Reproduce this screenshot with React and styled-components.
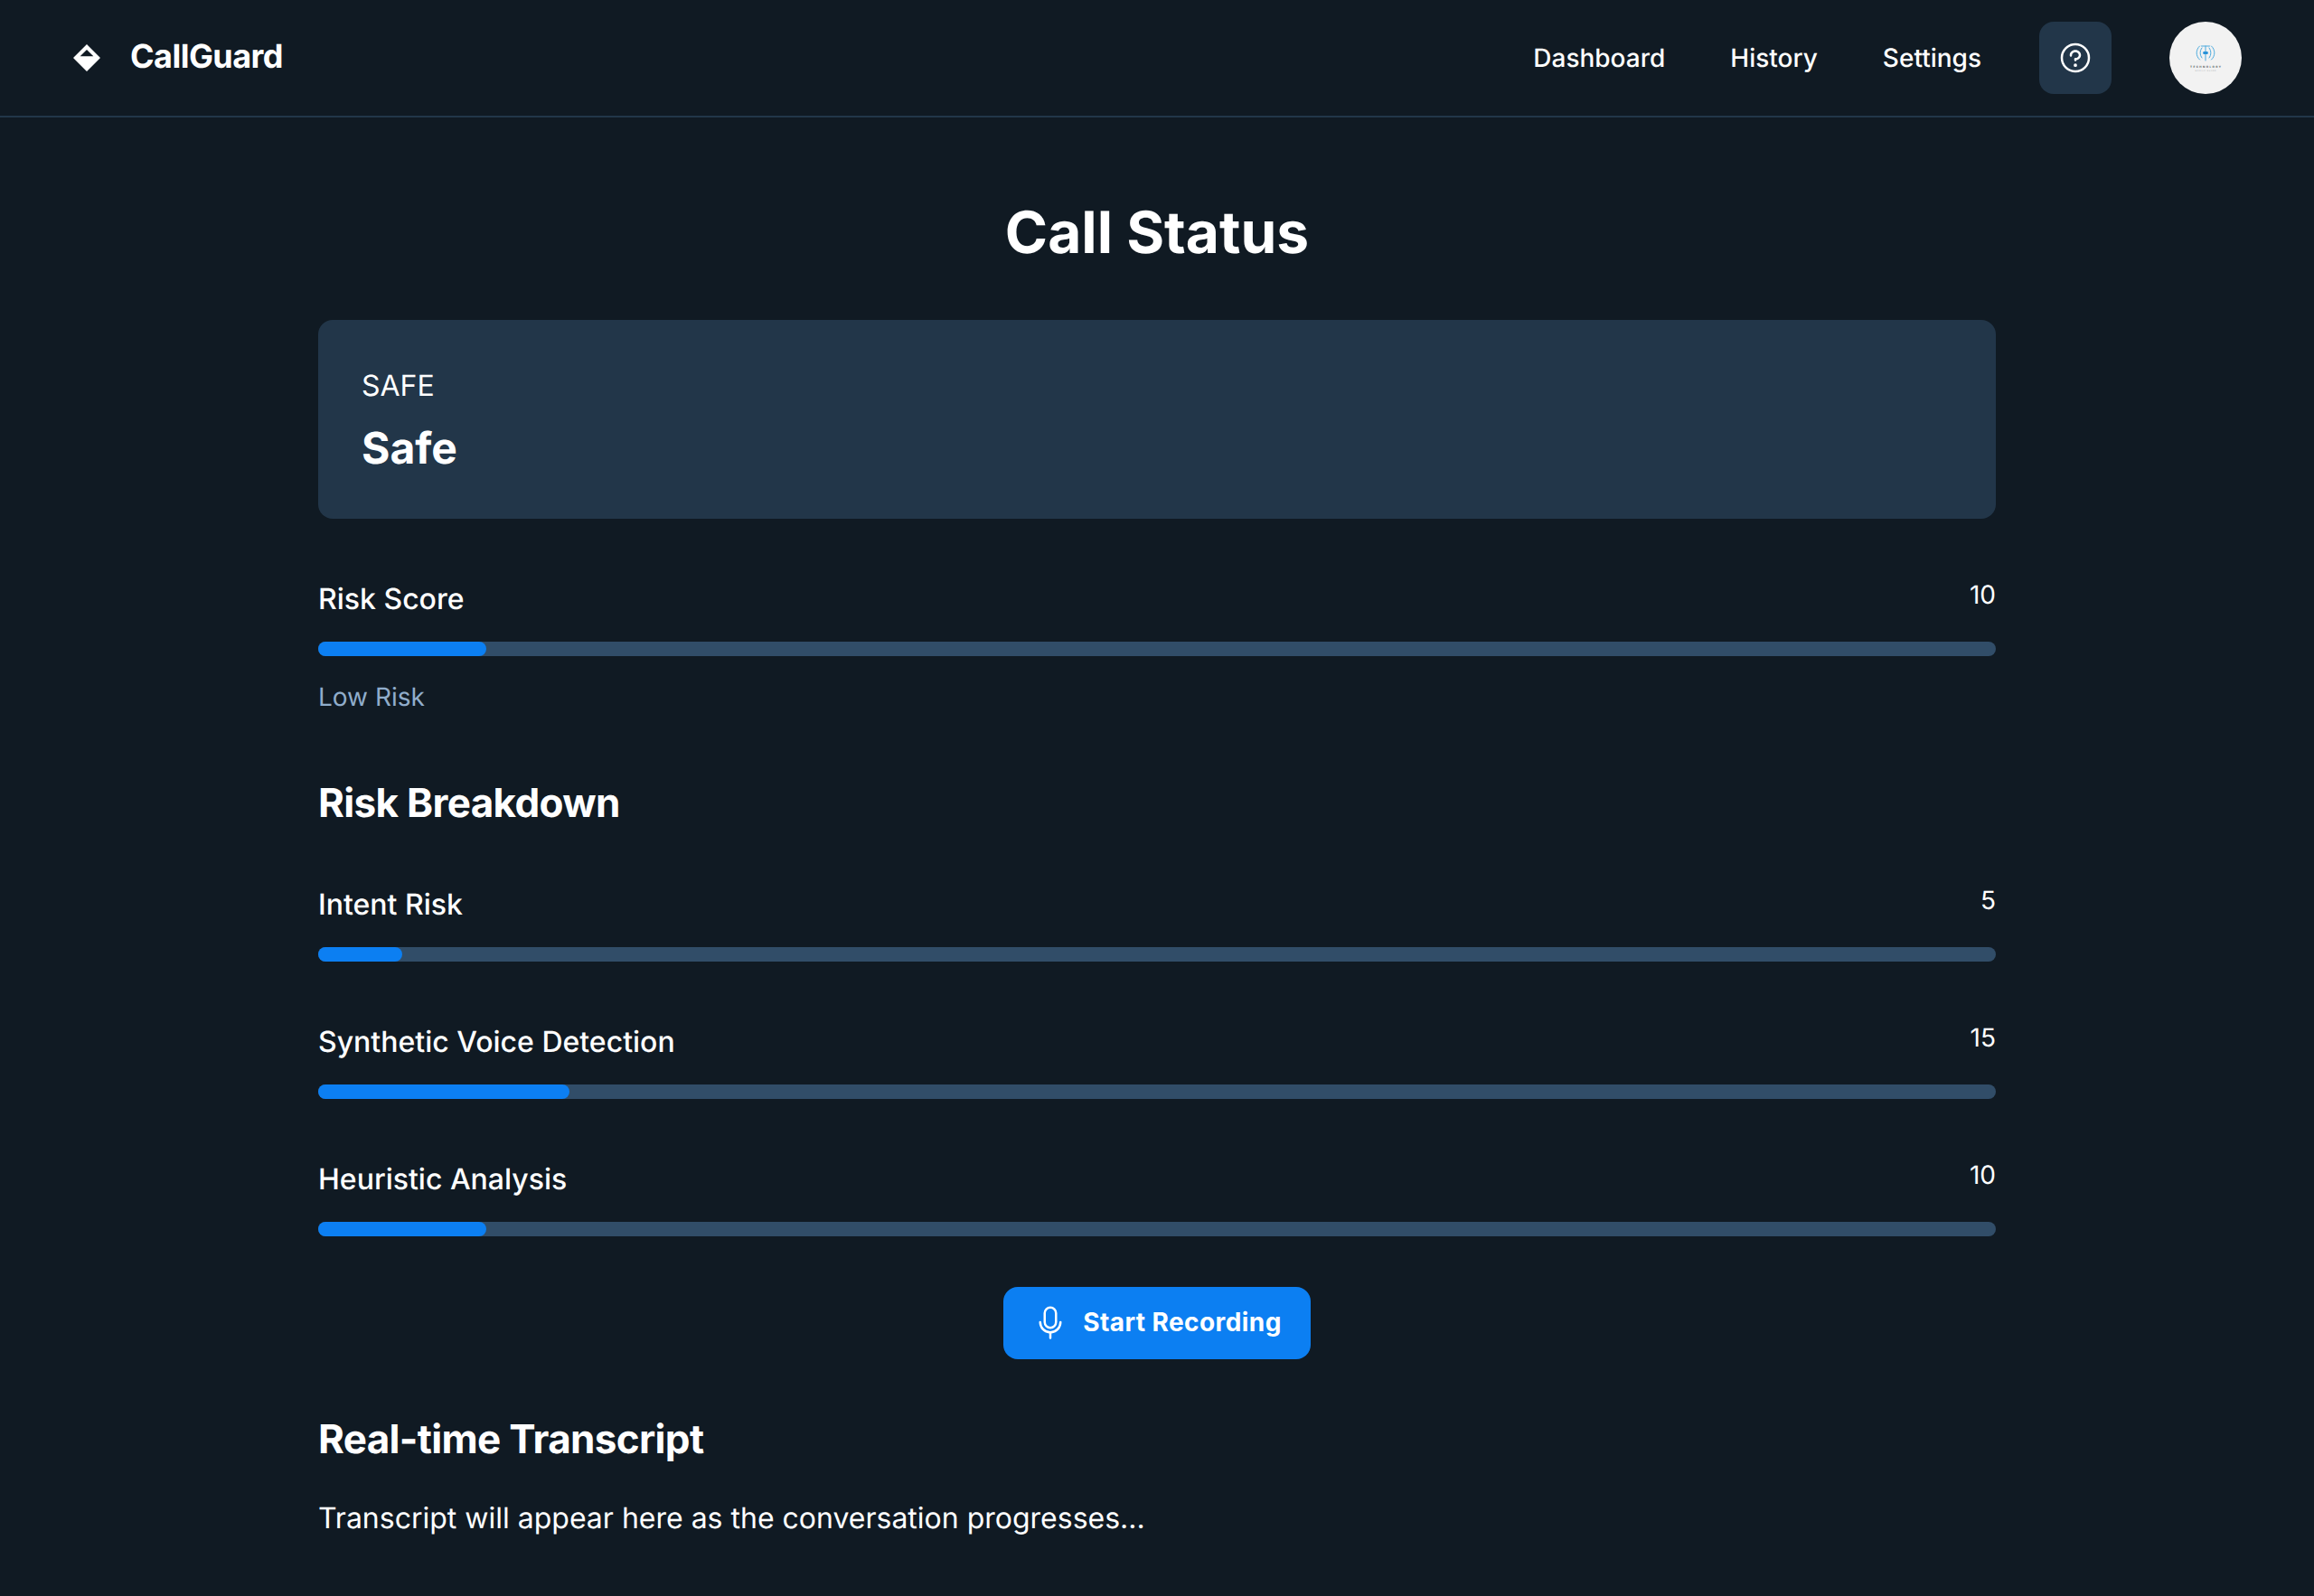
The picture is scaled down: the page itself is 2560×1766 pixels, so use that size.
import React from "react";
import styled, { createGlobalStyle } from "styled-components";
import { PiQuestion, PiMicrophone } from "react-icons/pi";

const GlobalStyle = createGlobalStyle`
  html, body {
    margin: 0;
    padding: 0;
    background-color: #101a23;
  }
  * {
    box-sizing: border-box;
  }
`;

const Page = styled.div`
  min-height: 1766px;
  background-color: #101a23;
  color: #ffffff;
  font-family: Inter, "Noto Sans", sans-serif;
  text-rendering: geometricPrecision;
  overflow: hidden;
`;

const Header = styled.header`
  display: flex;
  align-items: center;
  justify-content: space-between;
  padding: 24px 80px;
  border-bottom: 2px solid #223649;
`;

const Brand = styled.div`
  display: flex;
  align-items: center;
  gap: 32px;
`;

const BrandName = styled.h2`
  margin: 0;
  padding-bottom: 3px;
  font-size: 36px;
  font-weight: 700;
  line-height: 45px;
  letter-spacing: -0.54px;
`;

const HeaderRight = styled.div`
  display: flex;
  align-items: center;
  gap: 64px;
`;

const Nav = styled.nav`
  display: flex;
  align-items: center;
  gap: 72px;
`;

const NavLink = styled.a`
  color: #ffffff;
  font-size: 28px;
  font-weight: 500;
  line-height: 42px;
  text-decoration: none;
`;

const HelpButton = styled.button`
  display: flex;
  align-items: center;
  justify-content: center;
  width: 80px;
  height: 80px;
  padding: 0;
  border: none;
  border-radius: 16px;
  background-color: #223649;
  color: #ffffff;
`;

const Avatar = styled.div`
  width: 80px;
  height: 80px;
  border-radius: 50%;
  background-color: #f2f2f2;
  overflow: hidden;

  svg {
    display: block;
  }
`;

const Main = styled.main`
  width: 1856px;
  margin: 0 auto;
  padding-top: 40px;
`;

const Title = styled.h1`
  margin: 0;
  padding: 48px 0 24px;
  font-size: 64px;
  font-weight: 700;
  line-height: 80px;
  text-align: center;
`;

const StatusCard = styled.section`
  display: flex;
  flex-direction: column;
  gap: 16px;
  margin: 32px 0;
  padding: 48px;
  border-radius: 16px;
  background-color: #223649;
`;

const StatusLabel = styled.p`
  margin: 0;
  padding-top: 2px;
  font-size: 32px;
  font-weight: 400;
  line-height: 46px;
`;

const StatusValue = styled.p`
  margin: 0;
  font-size: 48px;
  font-weight: 700;
  line-height: 60px;
`;

const Meter = styled.div`
  display: flex;
  flex-direction: column;
  gap: 24px;
  padding: 32px 0;
`;

const MeterHead = styled.div`
  display: flex;
  justify-content: space-between;
  gap: 48px;
`;

const MeterLabel = styled.p`
  margin: 0;
  padding-top: 2px;
  font-size: 32px;
  font-weight: 500;
  line-height: 46px;
`;

const MeterValue = styled.p`
  margin: 0;
  font-size: 28px;
  font-weight: 400;
  line-height: 40px;
`;

const Track = styled.div`
  height: 16px;
  border-radius: 8px;
  background-color: #314d68;
`;

const Fill = styled.div`
  height: 16px;
  border-radius: 8px;
  background-color: #0c7ff2;
`;

const Hint = styled.p`
  margin: 0;
  color: #90adcb;
  font-size: 28px;
  font-weight: 400;
  line-height: 42px;
`;

const SectionTitle = styled.h2`
  margin: 0;
  padding: 37px 0 28px;
  font-size: 44px;
  font-weight: 700;
  line-height: 55px;
  letter-spacing: -0.66px;
`;

const Actions = styled.div`
  display: flex;
  justify-content: center;
  padding: 24px 0;
`;

const RecordButton = styled.button`
  display: flex;
  align-items: center;
  justify-content: center;
  gap: 16px;
  height: 80px;
  padding: 0 32px 2px;
  border: none;
  border-radius: 16px;
  background-color: #0c7ff2;
  color: #ffffff;
  font-family: inherit;
  font-size: 28px;
  font-weight: 700;
  letter-spacing: 0.42px;
`;

const Transcript = styled.p`
  margin: 0;
  padding: 8px 0 24px;
  font-size: 32px;
  font-weight: 400;
  line-height: 48px;
`;

const DiamondLogo = () => (
  <svg width="32" height="32" viewBox="0 0 48 48" fill="none">
    <path
      fillRule="evenodd"
      clipRule="evenodd"
      d="M24 1.5L46.5 24L24 46.5L1.5 24L24 1.5ZM24 10.5L13 21.5H35L24 10.5Z"
      fill="#ffffff"
    />
  </svg>
);

const AvatarArt = () => (
  <svg width="80" height="80" viewBox="0 0 80 80" fill="none">
    <g stroke="#4aa9dd" strokeWidth="1" strokeLinecap="round">
      <path d="M33.5 27C29 31 29 38 33.5 42" />
      <path d="M46.5 27C51 31 51 38 46.5 42" />
      <path d="M36 29C33.5 32 33.5 37 36 40" />
      <path d="M44 29C46.5 32 46.5 37 44 40" />
      <path d="M35.5 27H44.5" />
      <path d="M40 27V43" />
    </g>
    <rect x="37.2" y="33" width="5.6" height="3" rx="1.2" fill="#2a93d8" />
    <text
      x="23"
      y="51"
      fontSize="3"
      fontWeight="700"
      textLength="34"
      fill="#4c5256"
    >
      TECHNOLOGY
    </text>
    <text x="28.5" y="54.8" fontSize="2" textLength="23" fill="#a4a9ad">
      MOBILE GUARD
    </text>
  </svg>
);

const breakdown = [
  { label: "Intent Risk", value: 5 },
  { label: "Synthetic Voice Detection", value: 15 },
  { label: "Heuristic Analysis", value: 10 },
];

const RiskMeter = ({ label, value, hint }) => (
  <Meter>
    <MeterHead>
      <MeterLabel>{label}</MeterLabel>
      <MeterValue>{value}</MeterValue>
    </MeterHead>
    <Track>
      <Fill style={{ width: `${value}%` }} />
    </Track>
    {hint && <Hint>{hint}</Hint>}
  </Meter>
);

const App = () => {
  return (
    <Page>
      <GlobalStyle />
      <Header>
        <Brand>
          <DiamondLogo />
          <BrandName>CallGuard</BrandName>
        </Brand>
        <HeaderRight>
          <Nav>
            <NavLink>Dashboard</NavLink>
            <NavLink>History</NavLink>
            <NavLink>Settings</NavLink>
          </Nav>
          <HelpButton>
            <PiQuestion size={40} />
          </HelpButton>
          <Avatar>
            <AvatarArt />
          </Avatar>
        </HeaderRight>
      </Header>
      <Main>
        <Title>Call Status</Title>
        <StatusCard>
          <StatusLabel>SAFE</StatusLabel>
          <StatusValue>Safe</StatusValue>
        </StatusCard>
        <RiskMeter label="Risk Score" value={10} hint="Low Risk" />
        <SectionTitle>Risk Breakdown</SectionTitle>
        {breakdown.map((item) => (
          <RiskMeter key={item.label} label={item.label} value={item.value} />
        ))}
        <Actions>
          <RecordButton>
            <PiMicrophone size={40} />
            Start Recording
          </RecordButton>
        </Actions>
        <SectionTitle>Real-time Transcript</SectionTitle>
        <Transcript>Transcript will appear here as the conversation progresses...</Transcript>
      </Main>
    </Page>
  );
};

export default App;
